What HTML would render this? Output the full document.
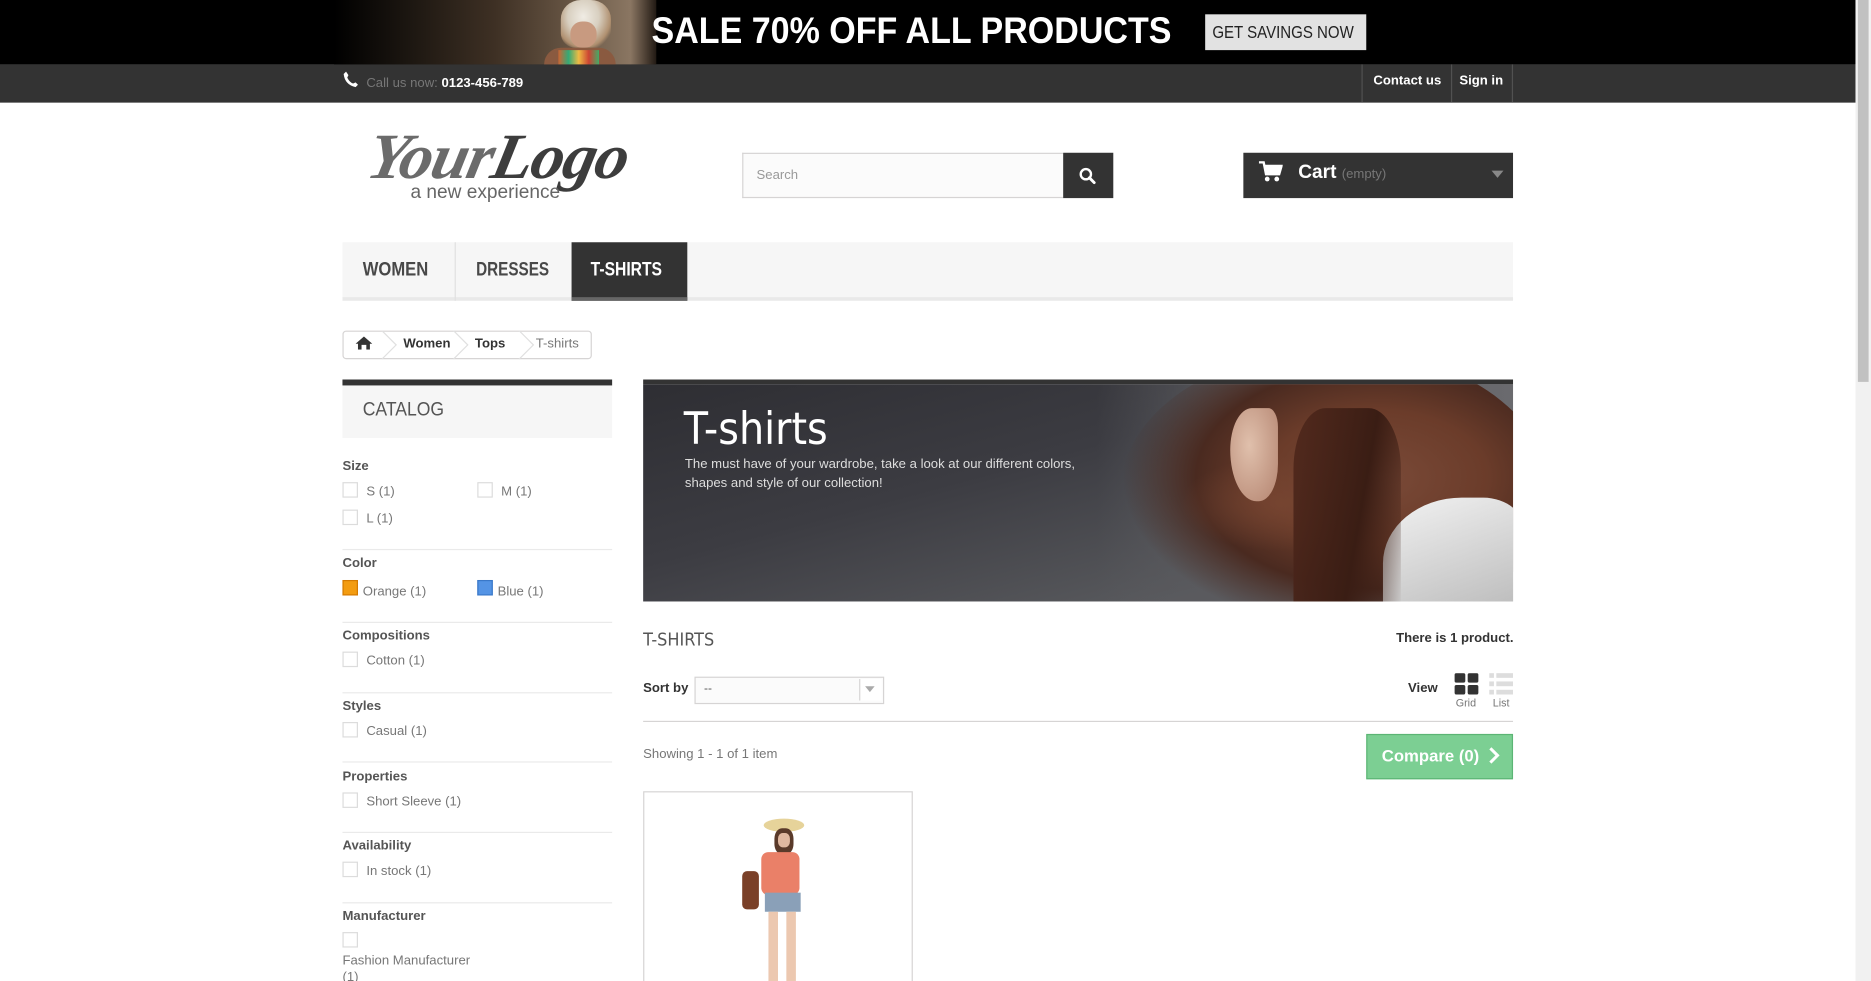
<!DOCTYPE html>
<html><head><meta charset="utf-8"><style>
html,body{margin:0;padding:0;width:1871px;height:981px;overflow:hidden;background:#fff}
#w{position:absolute;left:0;top:0;width:1568px;height:822px;transform:scale(1.19324,1.1934);transform-origin:0 0;font-family:"Liberation Sans",Arial,sans-serif;overflow:hidden}
.a{position:absolute}
.t{white-space:nowrap}
.n{transform-origin:0 0}
.cb{position:absolute;width:11px;height:11px;border:1px solid #dcdcdc;background:#fff}
.fl{color:#777;font-size:11px}
.fh{color:#555;font-size:11px;font-weight:bold}
.sep{position:absolute;left:287px;width:226px;height:1px;background:#eaeaea}
</style></head><body><div id="w">
<div class="a" style="left:0;top:0;width:1555px;height:54px;background:#000"></div>
<div class="a" style="left:280px;top:0;width:270px;height:54px;background:linear-gradient(90deg,#000 0%,#1e1812 25%,#3e3024 50%,#6a5846 75%,#8a7662 92%,#221a14 100%)"></div>
<div class="a" style="left:470px;top:0;width:42px;height:40px;border-radius:40% 40% 30% 30%;background:radial-gradient(ellipse at 45% 35%,#f0ece4 0%,#d8cfc0 40%,#b09070 70%,rgba(80,60,40,0) 80%)"></div>
<div class="a" style="left:478px;top:18px;width:22px;height:22px;border-radius:45%;background:#c89a80"></div>
<div class="a" style="left:456px;top:40px;width:60px;height:14px;border-radius:20px 20px 0 0;background:#8a5a40"></div>
<div class="a" style="left:468px;top:42px;width:34px;height:12px;background:linear-gradient(90deg,#c63,#3a7,#eb4,#c43,#4a6)"></div>
<div class="a t n" style="left:546px;top:8px;color:#fff;font-size:31px;font-weight:bold;transform:scaleX(0.92)">SALE 70% OFF ALL PRODUCTS</div>
<div class="a" style="left:1010px;top:12px;width:135px;height:30px;background:#e2e2e2"></div>
<div class="a t n" style="left:1016px;top:19px;color:#222;font-size:15px;transform:scaleX(0.84)">GET SAVINGS NOW</div>
<div class="a" style="left:0;top:54px;width:1555px;height:32px;background:#333"></div>
<svg class="a" style="left:287px;top:59px" width="14" height="15" viewBox="0 0 14 15"><path d="M3 1 L5 4 L4 6 Q6 10 9 11 L11 10 L13 12 L11 14 Q2 12 1 3 Z" fill="#fff"/></svg>
<div class="a t" style="left:307px;top:64px;font-size:11px;color:#777">Call us now: <b style="color:#fff">0123-456-789</b></div>
<div class="a" style="left:1141px;top:54px;width:1px;height:32px;background:#515151"></div>
<div class="a" style="left:1216px;top:54px;width:1px;height:32px;background:#515151"></div>
<div class="a" style="left:1267px;top:54px;width:1px;height:32px;background:#515151"></div>
<div class="a t" style="left:1151px;top:62px;font-size:11px;font-weight:bold;color:#fff">Contact us</div>
<div class="a t" style="left:1223px;top:62px;font-size:11px;font-weight:bold;color:#fff">Sign in</div>
<div class="a t n" style="left:316px;top:100px;font-family:'Liberation Serif',serif;font-style:italic;font-weight:bold;font-size:54px;color:#6b6b6b;letter-spacing:-1px;transform:scaleX(1.03) skewX(-12deg)">Your<span style="color:#3d3d3d">Logo</span></div>
<div class="a t" style="left:344px;top:153px;font-size:16px;color:#666">a new experience</div>
<div class="a" style="left:622px;top:128px;width:268px;height:36px;border:1px solid #d6d4d4;border-right:0;background:#fbfbfb"></div>
<div class="a t" style="left:634px;top:141px;font-size:11px;color:#999">Search</div>
<div class="a" style="left:891px;top:128px;width:42px;height:38px;background:#333"></div>
<svg class="a" style="left:904px;top:140px" width="15" height="15" viewBox="0 0 15 15"><circle cx="6" cy="6" r="4.3" fill="none" stroke="#fff" stroke-width="2"/><path d="M9 9 L13 13" stroke="#fff" stroke-width="2.4" stroke-linecap="round"/></svg>
<div class="a" style="left:1042px;top:128px;width:226px;height:38px;background:#333"></div>
<svg class="a" style="left:1055px;top:135px" width="20" height="18" viewBox="0 0 20 18"><path d="M0 1 H4 L6 11 H17 L19 4 H5" fill="none" stroke="#fff" stroke-width="2"/><rect x="5" y="4" width="13" height="6" fill="#fff"/><circle cx="7" cy="15" r="2" fill="#fff"/><circle cx="15" cy="15" r="2" fill="#fff"/></svg>
<div class="a t" style="left:1088px;top:136px;font-size:16px;font-weight:bold;color:#fff">Cart <span style="font-size:11px;color:#777;font-weight:normal">(empty)</span></div>
<div class="a" style="left:1250px;top:143px;border:5px solid transparent;border-top:6px solid #888"></div>
<div class="a" style="left:287px;top:203px;width:981px;height:46px;background:#f6f6f6;border-bottom:3px solid #e9e9e9"></div>
<div class="a" style="left:381px;top:203px;width:1px;height:49px;background:#e0e0e0"></div>
<div class="a" style="left:479px;top:203px;width:97px;height:46px;background:#333;border-bottom:3px solid #666"></div>
<div class="a t n" style="left:304px;top:218px;font-size:16px;color:#484848;font-weight:bold;transform:scaleX(0.87)">WOMEN</div>
<div class="a t n" style="left:399px;top:218px;font-size:16px;color:#484848;font-weight:bold;transform:scaleX(0.8)">DRESSES</div>
<div class="a t n" style="left:495px;top:218px;font-size:16px;color:#fff;font-weight:bold;transform:scaleX(0.82)">T-SHIRTS</div>
<div class="a" style="left:287px;top:277px;width:207px;height:22px;border:1px solid #d6d4d4;border-radius:3px;background:#fff"></div>
<svg class="a" style="left:298px;top:282px" width="14" height="11" viewBox="0 0 14 11"><path d="M7 0 L14 6 H12 V11 H9 V7 H5 V11 H2 V6 H0 Z" fill="#333"/></svg>
<svg class="a" style="left:320px;top:277px" width="180" height="24"><path d="M0 0 L12 12 L0 24 M60 0 L72 12 L60 24 M115 0 L127 12 L115 24" fill="none" stroke="#e0e0e0"/></svg>
<div class="a t" style="left:338px;top:282px;font-size:11px;font-weight:bold;color:#333">Women</div>
<div class="a t" style="left:398px;top:282px;font-size:11px;font-weight:bold;color:#333">Tops</div>
<div class="a t" style="left:449px;top:282px;font-size:11px;color:#777">T-shirts</div>
<div class="a" style="left:287px;top:318px;width:226px;height:5px;background:#333"></div>
<div class="a" style="left:287px;top:323px;width:226px;height:44px;background:#f6f6f6"></div>
<div class="a t n" style="left:304px;top:335px;font-size:16px;color:#555;transform:scaleX(0.92)">CATALOG</div>
<div class="a fh t" style="left:287px;top:385px">Size</div>
<div class="cb" style="left:287px;top:404px"></div><div class="a fl t" style="left:307px;top:406px">S (1)</div>
<div class="cb" style="left:400px;top:404px"></div><div class="a fl t" style="left:420px;top:406px">M (1)</div>
<div class="cb" style="left:287px;top:427px"></div><div class="a fl t" style="left:307px;top:429px">L (1)</div>
<div class="sep" style="top:460px"></div>
<div class="a fh t" style="left:287px;top:466px">Color</div>
<div class="a" style="left:287px;top:486px;width:11px;height:11px;background:#f39c11;border:1px solid #d47a00"></div><div class="a fl t" style="left:304px;top:490px">Orange (1)</div>
<div class="a" style="left:400px;top:486px;width:11px;height:11px;background:#5494e5;border:1px solid #3a78c8"></div><div class="a fl t" style="left:417px;top:490px">Blue (1)</div>
<div class="sep" style="top:521px"></div>
<div class="a fh t" style="left:287px;top:527px">Compositions</div>
<div class="cb" style="left:287px;top:546px"></div><div class="a fl t" style="left:307px;top:548px">Cotton (1)</div>
<div class="sep" style="top:580px"></div>
<div class="a fh t" style="left:287px;top:586px">Styles</div>
<div class="cb" style="left:287px;top:605px"></div><div class="a fl t" style="left:307px;top:607px">Casual (1)</div>
<div class="sep" style="top:638px"></div>
<div class="a fh t" style="left:287px;top:645px">Properties</div>
<div class="cb" style="left:287px;top:664px"></div><div class="a fl t" style="left:307px;top:666px">Short Sleeve (1)</div>
<div class="sep" style="top:697px"></div>
<div class="a fh t" style="left:287px;top:703px">Availability</div>
<div class="cb" style="left:287px;top:722px"></div><div class="a fl t" style="left:307px;top:724px">In stock (1)</div>
<div class="sep" style="top:756px"></div>
<div class="a fh t" style="left:287px;top:762px">Manufacturer</div>
<div class="cb" style="left:287px;top:781px"></div>
<div class="a fl t" style="left:287px;top:799px">Fashion Manufacturer</div>
<div class="a fl t" style="left:287px;top:813px">(1)</div>
<div class="a" style="left:539px;top:318px;width:729px;height:186px;background:linear-gradient(165deg,#2e2e33 0%,#3c3c42 40%,#55565a 75%,#6a6a6e 100%);border-top:4px solid #333;box-sizing:border-box;overflow:hidden">
<div class="a" style="left:380px;top:0;width:349px;height:186px;background:linear-gradient(90deg,rgba(90,90,95,0) 0%,#5a5a5e 35%,#6a6a6e 100%)"></div>
<div class="a" style="left:400px;top:-30px;width:360px;height:240px;border-radius:50%;background:radial-gradient(ellipse at 60% 45%,#7a4a38 0%,#6b3c2a 30%,#4a2a20 50%,rgba(80,55,48,0) 70%)"></div>
<div class="a" style="left:450px;top:60px;width:120px;height:80px;background:radial-gradient(ellipse at 70% 50%,rgba(120,70,50,.8) 0%,rgba(90,60,50,0) 70%)"></div>
<div class="a" style="left:492px;top:20px;width:40px;height:78px;border-radius:45% 20% 40% 55%;background:radial-gradient(ellipse at 40% 40%,#e0c0ac,#b48470)"></div>
<div class="a" style="left:620px;top:95px;width:120px;height:100px;border-radius:55% 30% 0 0;background:linear-gradient(160deg,#f2f2f2,#b8b8b8)"></div>
<div class="a" style="left:545px;top:20px;width:90px;height:170px;border-radius:30% 30% 0 0;background:linear-gradient(100deg,rgba(80,40,28,0.9),#3a1d14 60%,rgba(60,30,20,0))"></div>
</div>
<div class="a t" style="left:573px;top:338px;font-size:37px;color:#fff;font-family:'DejaVu Sans Condensed','DejaVu Sans',sans-serif">T-shirts</div>
<div class="a" style="left:574px;top:381px;width:340px;font-size:11px;line-height:16px;color:#ddd">The must have of your wardrobe, take a look at our different colors, shapes and style of our collection!</div>
<div class="a t" style="left:539px;top:527px;font-size:15px;color:#555;font-family:'DejaVu Sans Condensed','DejaVu Sans',sans-serif">T-SHIRTS</div>
<div class="a t" style="left:1170px;top:529px;font-size:11px;font-weight:bold;color:#333">There is 1 product.</div>
<div class="a t" style="left:539px;top:571px;font-size:11px;font-weight:bold;color:#333">Sort by</div>
<div class="a" style="left:582px;top:567px;width:157px;height:21px;border:1px solid #d6d4d4;background:#fbfbfb"></div>
<div class="a t" style="left:590px;top:572px;font-size:10px;color:#555">--</div>
<div class="a" style="left:720px;top:569px;width:18px;height:18px;border-left:1px solid #d6d4d4;background:#fff"></div>
<div class="a" style="left:725px;top:575px;border:4px solid transparent;border-top:5px solid #aaa"></div>
<div class="a t" style="left:1180px;top:571px;font-size:11px;font-weight:bold;color:#333">View</div>
<svg class="a" style="left:1219px;top:564px" width="20" height="18"><rect x="0" y="0" width="9" height="8" rx="1.5" fill="#333"/><rect x="11" y="0" width="9" height="8" rx="1.5" fill="#333"/><rect x="0" y="10" width="9" height="8" rx="1.5" fill="#333"/><rect x="11" y="10" width="9" height="8" rx="1.5" fill="#333"/></svg>
<svg class="a" style="left:1248px;top:564px" width="20" height="18"><g fill="#ddd"><rect x="0" y="0" width="4" height="4"/><rect x="6" y="0" width="14" height="4"/><rect x="0" y="7" width="4" height="4"/><rect x="6" y="7" width="14" height="4"/><rect x="0" y="14" width="4" height="4"/><rect x="6" y="14" width="14" height="4"/></g></svg>
<div class="a t" style="left:1220px;top:584px;font-size:9px;color:#777">Grid</div>
<div class="a t" style="left:1251px;top:584px;font-size:9px;color:#777">List</div>
<div class="a" style="left:539px;top:604px;width:729px;height:1px;background:#d6d4d4"></div>
<div class="a t" style="left:539px;top:626px;font-size:11px;color:#777">Showing 1 - 1 of 1 item</div>
<div class="a" style="left:1145px;top:615px;width:121px;height:36px;background:#7ccf93;border:1px solid #5cb575"></div>
<div class="a t" style="left:1158px;top:625px;font-size:14px;font-weight:bold;color:#fff">Compare (0)</div>
<svg class="a" style="left:1247px;top:626px" width="10" height="14"><path d="M2 1 L8 7 L2 13" fill="none" stroke="#fff" stroke-width="2.5"/></svg>
<div class="a" style="left:539px;top:663px;width:224px;height:170px;border:1px solid #d6d4d4;background:#fff"></div>
<div class="a" style="left:640px;top:686px;width:34px;height:11px;border-radius:50%;background:#e6d39a"></div>
<div class="a" style="left:649px;top:694px;width:16px;height:22px;border-radius:40%;background:#5a3a2a"></div>
<div class="a" style="left:652px;top:698px;width:10px;height:12px;border-radius:40%;background:#e0b8a0"></div>
<div class="a" style="left:638px;top:714px;width:32px;height:36px;border-radius:6px;background:#ea8068"></div>
<div class="a" style="left:622px;top:730px;width:14px;height:32px;border-radius:4px;background:#7a4028"></div>
<div class="a" style="left:641px;top:748px;width:30px;height:16px;background:#8aa0b8"></div>
<div class="a" style="left:644px;top:764px;width:8px;height:58px;background:#ecc8b0"></div>
<div class="a" style="left:659px;top:764px;width:8px;height:58px;background:#ecc8b0"></div>
<div class="a" style="left:1555px;top:0;width:13px;height:822px;background:#f1f1f1"></div>
<div class="a" style="left:1557px;top:0;width:9px;height:320px;background:#c1c1c1"></div>
</div></body></html>
